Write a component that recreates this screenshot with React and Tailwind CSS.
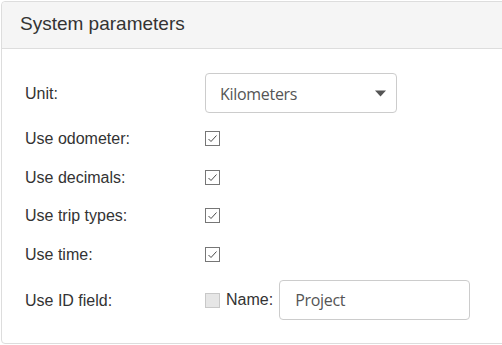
import { useState } from "react";

const font = { fontFamily: '"Liberation Sans", Arial, sans-serif' };

const CheckBox = ({ checked, onToggle }) => (
  <button
    type="button"
    onClick={onToggle}
    className={`w-[15px] h-[15px] flex items-center justify-center border ${
      checked ? "border-[#767676] bg-white" : "border-[#c8c8c8] bg-[#e6e6e6]"
    }`}
  >
    {checked && (
      <svg width="11" height="11" viewBox="0 0 11 11">
        <path d="M1.5 6 L4 8.5 L9.5 2.5" fill="none" stroke="#4a4a4a" strokeWidth="1" />
      </svg>
    )}
  </button>
);

const Row = ({ label, className, children }) => (
  <div className={`flex items-center ${className}`}>
    <div className="w-[180px] text-[16px] text-[#333] pt-px">{label}</div>
    {children}
  </div>
);

export default function App() {
  const [opts, setOpts] = useState({ odometer: true, decimals: true, trip: true, time: true, id: false });
  const toggle = (k) => setOpts((p) => ({ ...p, [k]: !p[k] }));

  return (
    <div className="w-[502px] h-[345px] overflow-hidden bg-white" style={font}>
      <div className="ml-px mt-px w-[520px] h-[343px] border border-[#dddddd] rounded-[4px]">
        <div className="h-[47px] bg-[#f5f5f5] border-b border-[#dddddd] rounded-t-[4px] flex items-center pl-[18px] pb-px">
          <h3 className="text-[19px] text-[#333]">System parameters</h3>
        </div>
        <div className="pl-[23px] pt-[24px]">
          <Row label="Unit:" className="h-[40px]">
            <div className="w-[192px] h-[40px] border border-[#cccccc] rounded-[4px] flex items-center justify-between pl-[14px] pr-[10px]">
              <span className="text-[16px] text-[#555] pt-px" style={{ fontFamily: '"Open Sans", "Noto Sans", sans-serif', letterSpacing: "-0.3px" }}>
                Kilometers
              </span>
              <svg width="11" height="7" viewBox="0 0 11 7">
                <path d="M0 0.5 L11 0.5 L5.5 6.5 Z" fill="#555" />
              </svg>
            </div>
          </Row>
          <Row label="Use odometer:" className="h-[20px] mt-[15px]">
            <CheckBox checked={opts.odometer} onToggle={() => toggle("odometer")} />
          </Row>
          <Row label="Use decimals:" className="h-[20px] mt-[19px]">
            <CheckBox checked={opts.decimals} onToggle={() => toggle("decimals")} />
          </Row>
          <Row label="Use trip types:" className="h-[20px] mt-[18px]">
            <CheckBox checked={opts.trip} onToggle={() => toggle("trip")} />
          </Row>
          <Row label="Use time:" className="h-[20px] mt-[19px]">
            <CheckBox checked={opts.time} onToggle={() => toggle("time")} />
          </Row>
          <Row label="Use ID field:" className="h-[40px] mt-[16px]">
            <div className="flex items-center">
              <CheckBox checked={opts.id} onToggle={() => toggle("id")} />
              <span className="ml-[6px] text-[16px] text-[#333]">Name:</span>
              <input
                defaultValue="Project"
                className="ml-[6px] w-[191px] h-[40px] border border-[#cccccc] rounded-[4px] px-[15px] text-[16px] text-[#555] outline-none"
                style={{ fontFamily: '"Open Sans", "Noto Sans", sans-serif', letterSpacing: "-0.3px" }}
              />
            </div>
          </Row>
        </div>
      </div>
    </div>
  );
}
